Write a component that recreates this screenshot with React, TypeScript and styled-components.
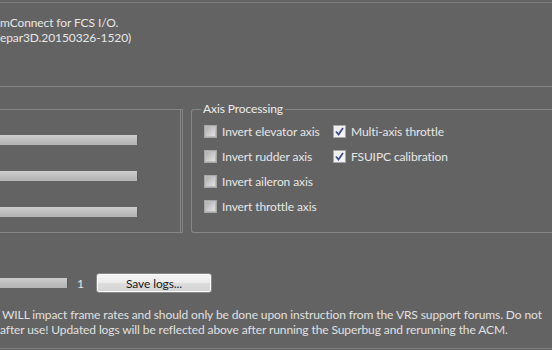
import styled, { createGlobalStyle } from "styled-components";

const GlobalStyle = createGlobalStyle`
    html, body {
        margin: 0;
        padding: 0;
        background: #636363;
    }
    body {
        font-family: Lato, "Open Sans", sans-serif;
        font-size: 12px;
        letter-spacing: -0.1px;
        color: #e6e6e6;
    }
`;

const Page = styled.div`
    width: 552px;
    height: 350px;
    overflow: hidden;
    display: flex;
    flex-direction: column;
`;

const Rule = styled.div<{ $top: number }>`
    height: 1px;
    margin-top: ${p => p.$top}px;
    background: #7f7f7f;
    flex: none;
`;

const Header = styled.div`
    margin-top: 12px;
    line-height: 15px;
    white-space: nowrap;
`;

const Frame = styled.div`
    margin-top: 41px;
    border-top: 1px solid #868686;
    padding-top: 15px;
    display: flex;
    align-items: stretch;
    gap: 8px;
`;

const SliderBox = styled.div`
    margin-top: 7px;
    width: 180px;
    border: 1px solid #858585;
    border-left: none;
    border-right: 3px double #858585;
    padding: 25px 0 15px;
    display: flex;
    flex-direction: column;
    gap: 26px;
`;

const Bar = styled.div<{ $width: number }>`
    width: ${p => p.$width}px;
    height: 10px;
    background: linear-gradient(#cdcdcd, #bcbcbc 60%, #b3b3b3);
    box-shadow: 2px 0 0 -1px #595959;
`;

const Group = styled.fieldset`
    flex: 1;
    margin: 0;
    min-width: 0;
    border: 1px solid #868686;
    border-right: none;
    border-radius: 3px 0 0 3px;
    padding: 3px 0 11px 12px;
    display: flex;
`;

const Legend = styled.legend`
    padding: 0 2px;
    margin-left: -3px;
    line-height: 14px;
    color: #ececec;
`;

const Column = styled.div<{ $width?: number }>`
    display: flex;
    flex-direction: column;
    width: ${p => (p.$width ? `${p.$width}px` : "auto")};
`;

const CheckRow = styled.label`
    height: 25px;
    display: flex;
    align-items: center;
    gap: 5px;
    white-space: nowrap;
`;

const Box = styled.span<{ $checked?: boolean }>`
    width: 11px;
    height: 11px;
    flex: none;
    border: 1px solid #a7a7a7;
    display: flex;
    align-items: center;
    justify-content: center;
    background: ${p =>
        p.$checked
            ? "linear-gradient(135deg, #e6e8ee, #fafafa)"
            : "linear-gradient(135deg, #a9a9a9, #d6d6d6 70%, #e4e4e4)"};
    box-shadow: inset 0 0 0 1px ${p => (p.$checked ? "#f2f2f2" : "#bcbcbc")};
`;

const BottomRow = styled.div`
    margin-top: 40px;
    height: 20px;
    display: flex;
    align-items: center;
`;

const Count = styled.span`
    margin-left: 10px;
    width: 19px;
`;

const Button = styled.button`
    width: 116px;
    height: 20px;
    padding: 0;
    font-family: inherit;
    font-size: 12px;
    letter-spacing: inherit;
    color: #1c1c1c;
    border: 1px solid #8a8a8a;
    border-radius: 3px;
    background: linear-gradient(#f6f6f6, #ebebeb 50%, #dddddd 51%, #d3d3d3);
    box-shadow: inset 0 0 0 1px #fbfbfb;
`;

const Note = styled.div`
    margin-top: 14px;
    line-height: 15px;
    white-space: nowrap;
    color: #e0e0e0;
`;

const NoteLine = styled.div<{ $indent: number }>`
    padding-left: ${p => p.$indent}px;
`;

const Check = () => (
    <svg width="9" height="9" viewBox="0 0 9 9">
        <path d="M1 4.5 L3.5 7.5 L8 1" fill="none" stroke="#3d4f8f" strokeWidth="1.8" />
    </svg>
);

const CheckItem: React.FC<{ label: string; checked?: boolean }> = ({ label, checked }) => (
    <CheckRow>
        <Box $checked={checked}>{checked && <Check />}</Box>
        {label}
    </CheckRow>
);

export default function App() {
    return (
        <Page>
            <GlobalStyle />
            <Rule $top={2} />
            <Header>
                <div>mConnect for FCS I/O.</div>
                <div>epar3D.20150326-1520)</div>
            </Header>
            <Frame>
                <SliderBox>
                    <Bar $width={137} />
                    <Bar $width={137} />
                    <Bar $width={137} />
                </SliderBox>
                <Group>
                    <Legend>Axis Processing</Legend>
                    <Column $width={129}>
                        <CheckItem label="Invert elevator axis" />
                        <CheckItem label="Invert rudder axis" />
                        <CheckItem label="Invert aileron axis" />
                        <CheckItem label="Invert throttle axis" />
                    </Column>
                    <Column>
                        <CheckItem label="Multi-axis throttle" checked />
                        <CheckItem label="FSUIPC calibration" checked />
                    </Column>
                </Group>
            </Frame>
            <BottomRow>
                <Bar $width={67} />
                <Count>1</Count>
                <Button>Save logs...</Button>
            </BottomRow>
            <Note>
                <NoteLine $indent={2}>WILL impact frame rates and should only be done upon instruction from the VRS support forums. Do not</NoteLine>
                <NoteLine $indent={0}>after use! Updated logs will be reflected above after running the Superbug and rerunning the ACM.</NoteLine>
            </Note>
            <Rule $top={11} />
        </Page>
    );
}
